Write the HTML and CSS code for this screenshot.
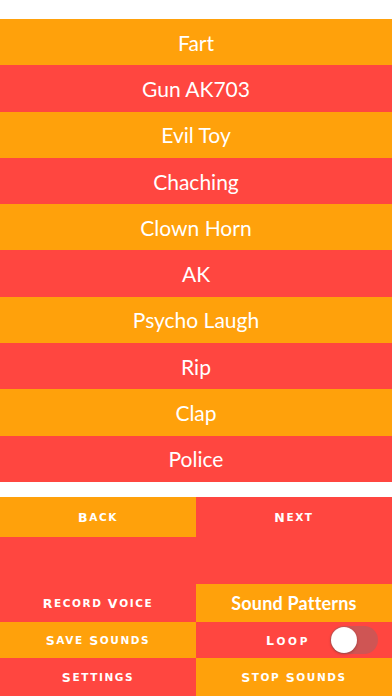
FILE: index.html
```html
<!DOCTYPE html>
<html lang="en">
<head>
  <meta charset="UTF-8">
  <meta name="viewport" content="width=device-width, initial-scale=1.0">
  <title>Soundboard</title>
  <link rel="stylesheet" href="styles.css">
</head>
<body>
  <div class="app">
    <div class="top-space"></div>

    <div class="sound-list">
      <div class="sound orange">Fart</div>
      <div class="sound red">Gun AK703</div>
      <div class="sound orange">Evil Toy</div>
      <div class="sound red">Chaching</div>
      <div class="sound orange">Clown Horn</div>
      <div class="sound red">AK</div>
      <div class="sound orange">Psycho Laugh</div>
      <div class="sound red">Rip</div>
      <div class="sound orange">Clap</div>
      <div class="sound red">Police</div>
    </div>

    <div class="mid-space"></div>

    <div class="controls">
      <div class="btn orange"><span class="cap">B</span>ack</div>
      <div class="btn red"><span class="cap">N</span>ext</div>
      <div class="filler red"></div>
      <div class="btn red"><span class="cap">R</span>ecord <span class="cap">V</span>oice</div>
      <div class="btn orange plain">Sound Patterns</div>
      <div class="btn orange"><span class="cap">S</span>ave <span class="cap">S</span>ounds</div>
      <div class="btn red loop">
        <span><span class="cap">L</span>oop</span>
        <div class="switch"><div class="knob"></div></div>
      </div>
      <div class="btn red"><span class="cap">S</span>ettings</div>
      <div class="btn orange"><span class="cap">S</span>top <span class="cap">S</span>ounds</div>
    </div>
  </div>
</body>
</html>
```

FILE: styles.css
```css
* {
  margin: 0;
  padding: 0;
  box-sizing: border-box;
}

body {
  background: white;
  font-family: Lato, "Open Sans", sans-serif;
  color: white;
}

.app {
  width: 392px;
  height: 696px;
  display: flex;
  flex-direction: column;
  overflow: hidden;
}

.top-space {
  height: 19px;
}

.mid-space {
  height: 15px;
}

.orange {
  background: #ffa10b;
}

.red {
  background: #ff4640;
}

.sound-list {
  height: 463px;
  display: flex;
  flex-direction: column;
}

.sound {
  flex: 1;
  display: flex;
  align-items: center;
  justify-content: center;
  font-size: 21px;
}

.controls {
  flex: 1;
  display: grid;
  grid-template-columns: 196px 196px;
  grid-template-rows: 40px 47px 38px 36px 38px;
}

.filler {
  grid-column: 1 / 3;
}

/* copperplate-ish: big first letter, small caps for the rest */
.btn {
  display: flex;
  align-items: center;
  justify-content: center;
  font-family: "DejaVu Sans", sans-serif;
  font-weight: bold;
  text-transform: uppercase;
  font-size: 10.5px;
  letter-spacing: 1.6px;
  white-space: pre;
}

.btn .cap {
  font-size: 12.5px;
}

.btn.plain {
  font-family: Lato, "Open Sans", sans-serif;
  text-transform: none;
  font-size: 18px;
  letter-spacing: 0.2px;
}

.loop {
  gap: 20px;
  padding-left: 70px;
  justify-content: flex-start;
}

.loop > span {
  letter-spacing: 2.6px;
}

.switch {
  width: 48px;
  height: 28px;
  border-radius: 14px;
  background: #cf5554;
  padding: 1px;
}

.knob {
  width: 26px;
  height: 26px;
  border-radius: 50%;
  background: white;
  box-shadow: 0 1px 3px rgba(0, 0, 0, 0.25);
}
```
